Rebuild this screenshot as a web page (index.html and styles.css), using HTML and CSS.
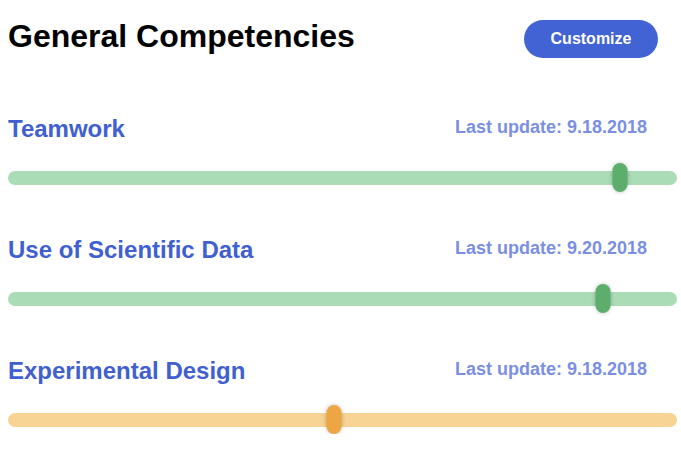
FILE: index.html
```html
<!DOCTYPE html>
<html>
<head>
<meta charset="utf-8">
<link rel="stylesheet" href="styles.css">
</head>
<body>
<div class="page">
  <div class="header">
    <h1 class="title">General Competencies</h1>
    <button class="customize">Customize</button>
  </div>

  <div class="competency">
    <div class="row">
      <h2 class="name">Teamwork</h2>
      <span class="updated">Last update: 9.18.2018</span>
    </div>
    <div class="slider green">
      <div class="track"></div>
      <div class="thumb" style="left: 91.5%"></div>
    </div>
  </div>

  <div class="competency">
    <div class="row">
      <h2 class="name">Use of Scientific Data</h2>
      <span class="updated">Last update: 9.20.2018</span>
    </div>
    <div class="slider green">
      <div class="track"></div>
      <div class="thumb" style="left: 88.9%"></div>
    </div>
  </div>

  <div class="competency">
    <div class="row">
      <h2 class="name">Experimental Design</h2>
      <span class="updated">Last update: 9.18.2018</span>
    </div>
    <div class="slider orange">
      <div class="track"></div>
      <div class="thumb" style="left: 48.8%"></div>
    </div>
  </div>
</div>
</body>
</html>
```

FILE: styles.css
```css
html, body {
  margin: 0;
  padding: 0;
  background: #ffffff;
}

body {
  font-family: "Liberation Sans", Arial, sans-serif;
}

.page {
  padding: 20px 4px 0 8px;
}

.header {
  display: flex;
  justify-content: space-between;
  align-items: flex-start;
  margin-bottom: 13px;
}

.title {
  margin: 0;
  font-size: 32px;
  line-height: 32px;
  font-weight: bold;
  color: #000000;
}

.customize {
  margin-right: 19px;
  width: 134px;
  height: 38px;
  border: none;
  border-radius: 19px;
  background: #4263d3;
  color: #ffffff;
  font-family: "Liberation Sans", Arial, sans-serif;
  font-size: 16px;
  font-weight: bold;
  padding: 0;
}

.competency {
  padding-top: 44px;
}

.row {
  display: flex;
  justify-content: space-between;
  align-items: flex-start;
  height: 28px;
}

.name {
  margin: 0;
  font-size: 24px;
  line-height: 28px;
  font-weight: bold;
  color: #4060d1;
}

.updated {
  margin-right: 30px;
  font-size: 18px;
  line-height: 24px;
  font-weight: bold;
  color: #7a8fe3;
}

.slider {
  position: relative;
  margin-top: 20px;
  height: 29px;
  display: flex;
  align-items: center;
}

.track {
  width: 100%;
  height: 14px;
  border-radius: 7px;
}

.thumb {
  position: absolute;
  top: 0;
  width: 15px;
  height: 29px;
  border-radius: 8px;
  transform: translateX(-50%);
  box-shadow: 0 0 4px rgba(0, 0, 0, 0.25);
}

.green .track { background: #aadcb6; }
.green .thumb { background: #5dae6d; }

.orange .track { background: #f7d394; }
.orange .thumb { background: #eda643; }
```
